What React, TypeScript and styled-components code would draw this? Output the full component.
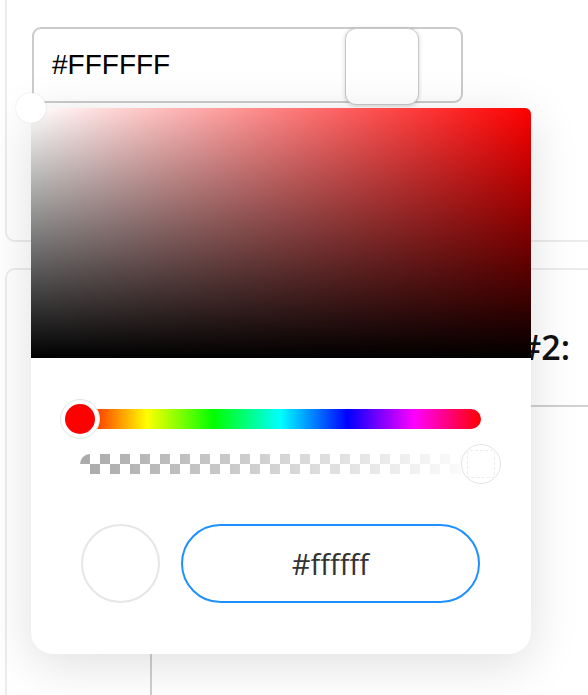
import React from "react";
import styled, { createGlobalStyle } from "styled-components";

const Global = createGlobalStyle`
  html, body { margin: 0; padding: 0; background: #fff; }
  body { font-family: "Open Sans", "Noto Sans", sans-serif; }
  * { box-sizing: border-box; }
`;

const Page = styled.div`
  position: relative;
  width: 588px;
  height: 695px;
  overflow: hidden;
  padding-left: 5px;
  display: flex;
  flex-direction: column;
`;

const Card = styled.section<{ $top?: boolean }>`
  width: 640px;
  border: 2px solid #ececec;
  border-radius: 10px;
  flex-shrink: 0;
  ${(p) =>
    p.$top
      ? `margin-top: -20px; height: 262px; padding: 45px 0 0 25px;`
      : `margin-top: 26px; height: 480px; display: flex; flex-direction: column;`}
`;

const InputBox = styled.div`
  width: 431px;
  height: 76px;
  border: 2px solid #cbcbcb;
  border-radius: 9px;
  display: flex;
  align-items: center;
  padding: 0 42px 0 18px;
`;

const HexText = styled.span`
  flex: 1;
  font-family: "Liberation Sans", Arial, sans-serif;
  font-size: 28px;
  color: #000;
`;

const Swatch = styled.div`
  width: 74px;
  height: 77px;
  margin-top: 2px;
  border: 1px solid #c9c9c9;
  border-radius: 11px;
  background: #fff;
  box-shadow: 0 1px 4px rgba(0, 0, 0, 0.18);
`;

const Header = styled.div`
  height: 135px;
  width: 602px;
  display: flex;
  justify-content: flex-end;
  align-items: flex-end;
  padding: 0 39px 38px 0;
`;

const Title = styled.h2`
  margin: 0;
  font-size: 34px;
  font-weight: 600;
  line-height: 40px;
  color: #111;
`;

const Divider = styled.div`
  height: 2px;
  margin-left: 143px;
  background: #d0d0d0;
`;

const Body = styled.div`
  flex: 1;
  display: flex;
`;

const LabelCol = styled.div`
  width: 145px;
  border-right: 2px solid #cfcfcf;
`;

const Popup = styled.div`
  position: absolute;
  left: 31px;
  top: 108px;
  width: 500px;
  height: 546px;
  background: #fff;
  border-radius: 6px 6px 22px 22px;
  box-shadow: 0 10px 50px rgba(0, 0, 0, 0.13);
  display: flex;
  flex-direction: column;
`;

const Saturation = styled.div`
  position: relative;
  height: 250px;
  border-radius: 6px 6px 0 0;
  background: linear-gradient(to top, #000, rgba(0, 0, 0, 0)),
    linear-gradient(to right, #fff, #f00);
`;

const SatPointer = styled.div`
  position: absolute;
  left: -15px;
  top: -15px;
  width: 30px;
  height: 30px;
  border-radius: 50%;
  background: #fff;
  box-shadow: 0 0 2px rgba(0, 0, 0, 0.12);
`;

const Controls = styled.div`
  padding: 51px 50px 0 49px;
  display: flex;
  flex-direction: column;
`;

const Track = styled.div<{ $kind: "hue" | "alpha" }>`
  position: relative;
  height: 20px;
  width: 401px;
  border-radius: 10px;
  ${(p) =>
    p.$kind === "hue"
      ? `background: linear-gradient(to right, #f00 0%, #ff0 16.67%, #0f0 33.33%, #0ff 50%, #00f 66.67%, #f0f 83.33%, #f00 100%);`
      : `margin-top: 25px;
         background-color: #fff;
         background-image: linear-gradient(to right, rgba(255,255,255,0), #fff),
           conic-gradient(#fff 25%, #aaa 0 50%, #fff 0 75%, #aaa 0);
         background-size: 100% 100%, 20px 20px;`}
`;

const Thumb = styled.div<{ $pos: "start" | "end" }>`
  position: absolute;
  top: 50%;
  ${(p) => (p.$pos === "start" ? "left: -20px;" : "right: -20px;")}
  width: 40px;
  height: 40px;
  margin-top: -20px;
  border-radius: 50%;
  background: #fff;
  border: 1px solid #e4e4e4;
  display: flex;
  align-items: center;
  justify-content: center;
`;

const ThumbDot = styled.div<{ $fill: string }>`
  width: 30px;
  height: 30px;
  border-radius: 50%;
  background: ${(p) => p.$fill};
`;

const ThumbSquare = styled.div`
  width: 28px;
  height: 28px;
  border: 1px dashed #ececec;
  border-radius: 3px;
`;

const Bottom = styled.div`
  margin-top: 50px;
  display: flex;
  align-items: center;
  gap: 21px;
`;

const Preview = styled.div`
  width: 79px;
  height: 79px;
  margin-left: 1px;
  border-radius: 50%;
  border: 2px solid #e6e6e6;
  background: #fff;
`;

const HexButton = styled.div`
  width: 299px;
  height: 79px;
  border: 2px solid #1e90ff;
  border-radius: 40px;
  display: flex;
  align-items: center;
  justify-content: center;
  font-size: 29px;
  color: #333;
`;

export default function App() {
  return (
    <>
      <Global />
      <Page>
        <Card $top>
          <InputBox>
            <HexText>#FFFFFF</HexText>
            <Swatch />
          </InputBox>
        </Card>
        <Card>
          <Header>
            <Title>Color #2:</Title>
          </Header>
          <Divider />
          <Body>
            <LabelCol />
          </Body>
        </Card>
        <Popup>
          <Saturation>
            <SatPointer />
          </Saturation>
          <Controls>
            <Track $kind="hue">
              <Thumb $pos="start">
                <ThumbDot $fill="#f00" />
              </Thumb>
            </Track>
            <Track $kind="alpha">
              <Thumb $pos="end">
                <ThumbSquare />
              </Thumb>
            </Track>
            <Bottom>
              <Preview />
              <HexButton>#ffffff</HexButton>
            </Bottom>
          </Controls>
        </Popup>
      </Page>
    </>
  );
}
